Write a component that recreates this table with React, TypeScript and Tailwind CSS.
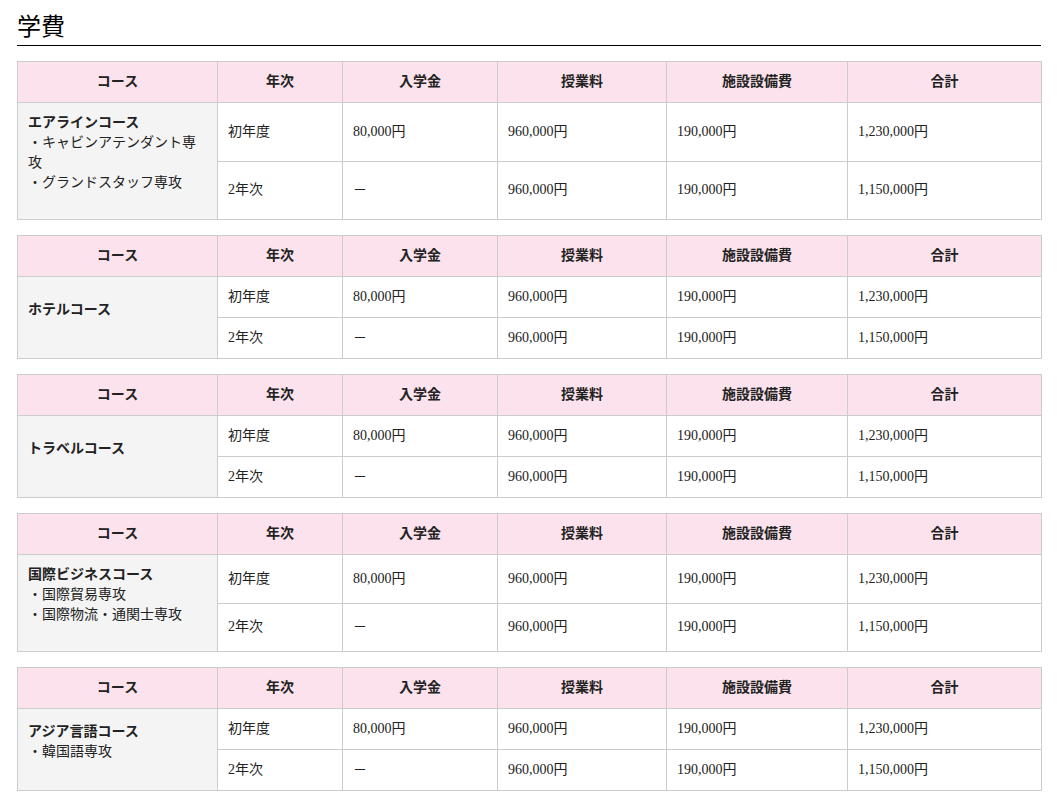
import React from "react";

type Course = {
	name: string;
	majors: string[];
};

const courses: Course[] = [
	{ name: "エアラインコース", majors: ["・キャビンアテンダント専攻", "・グランドスタッフ専攻"] },
	{ name: "ホテルコース", majors: [] },
	{ name: "トラベルコース", majors: [] },
	{ name: "国際ビジネスコース", majors: ["・国際貿易専攻", "・国際物流・通関士専攻"] },
	{ name: "アジア言語コース", majors: ["・韓国語専攻"] },
];

const heads = ["コース", "年次", "入学金", "授業料", "施設設備費", "合計"];

const rows = [
	["初年度", "80,000円", "960,000円", "190,000円", "1,230,000円"],
	["2年次", "－", "960,000円", "190,000円", "1,150,000円"],
];

const th =
	"border border-[#cccccc] bg-[#fbe2ec] px-[10px] py-[10px] text-center text-sm leading-5 font-bold";
const td = "border border-[#cccccc] px-[10px] py-[10px] text-left align-middle text-sm leading-5";

function FeeTable({ course }: { course: Course }) {
	return (
		<table className="mb-[15px] w-full table-fixed border-collapse border border-[#cccccc]">
			<colgroup>
				<col className="w-[200px]" />
				<col className="w-[125px]" />
				<col className="w-[155px]" />
				<col className="w-[169px]" />
				<col className="w-[181px]" />
				<col className="w-[194px]" />
			</colgroup>
			<thead>
				<tr>
					{heads.map((h) => (
						<th key={h} className={th}>
							{h}
						</th>
					))}
				</tr>
			</thead>
			<tbody>
				{rows.map((r, i) => (
					<tr key={i}>
						{i === 0 ? (
							<td rowSpan={2} className={`${td} bg-[#f4f4f4]`}>
								<div className="mb-4">
									<p className="font-bold">{course.name}</p>
									{course.majors.map((m) => (
										<p key={m}>{m}</p>
									))}
								</div>
							</td>
						) : null}
						{r.map((c, j) => (
							<td key={j} className={td}>
								{c}
							</td>
						))}
					</tr>
				))}
			</tbody>
		</table>
	);
}

export default function App() {
	return (
		<div
			className="min-h-screen bg-white pl-[17px] pr-[16px] pt-[12px] text-[#222222]"
			style={{ fontFamily: '"Liberation Serif", "Noto Sans CJK JP", serif' }}
		>
			<h2 className="mb-[15px] border-b border-black pb-[3px] text-2xl leading-[30px] text-black">
				学費
			</h2>
			{courses.map((c) => (
				<FeeTable key={c.name} course={c} />
			))}
		</div>
	);
}
